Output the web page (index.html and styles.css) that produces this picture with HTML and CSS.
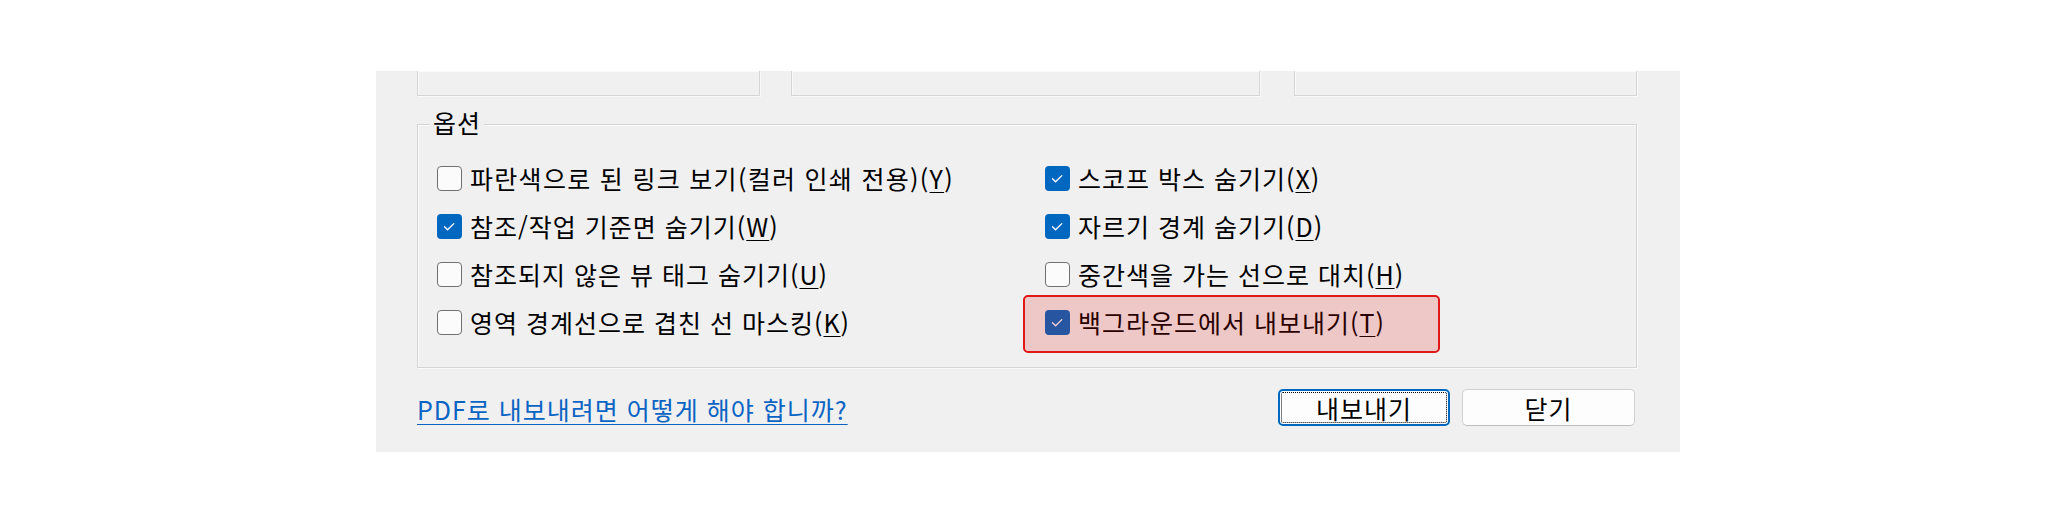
FILE: index.html
```html
<!DOCTYPE html>
<html lang="ko">
<head>
<meta charset="utf-8">
<title>PDF 내보내기 옵션</title>
<link rel="stylesheet" href="styles.css">
</head>
<body>
<div class="dialog">
  <div class="top-row">
    <div class="etched box1"></div>
    <div class="etched box2"></div>
    <div class="etched box3"></div>
  </div>

  <div class="etched group">
    <span class="legend">옵션</span>
    <div class="options">
      <label class="opt">
        <span class="cb"></span>
        <span class="txt">파란색으로 된 링크 보기(컬러 인쇄 전용)(<u>Y</u>)</span>
      </label>
      <label class="opt">
        <span class="cb on"><svg viewBox="0 0 25 25"><path d="M7.5 12.8 L10.6 15.8 L16.8 9.6"/></svg></span>
        <span class="txt">스코프 박스 숨기기(<u>X</u>)</span>
      </label>
      <label class="opt">
        <span class="cb on"><svg viewBox="0 0 25 25"><path d="M7.5 12.8 L10.6 15.8 L16.8 9.6"/></svg></span>
        <span class="txt">참조/작업 기준면 숨기기(<u>W</u>)</span>
      </label>
      <label class="opt">
        <span class="cb on"><svg viewBox="0 0 25 25"><path d="M7.5 12.8 L10.6 15.8 L16.8 9.6"/></svg></span>
        <span class="txt">자르기 경계 숨기기(<u>D</u>)</span>
      </label>
      <label class="opt">
        <span class="cb"></span>
        <span class="txt">참조되지 않은 뷰 태그 숨기기(<u>U</u>)</span>
      </label>
      <label class="opt">
        <span class="cb"></span>
        <span class="txt">중간색을 가는 선으로 대치(<u>H</u>)</span>
      </label>
      <label class="opt">
        <span class="cb"></span>
        <span class="txt">영역 경계선으로 겹친 선 마스킹(<u>K</u>)</span>
      </label>
      <label class="opt highlighted">
        <span class="cb on"><svg viewBox="0 0 25 25"><path d="M7.5 12.8 L10.6 15.8 L16.8 9.6"/></svg></span>
        <span class="txt">백그라운드에서 내보내기(<u>T</u>)</span>
        <span class="mark"></span>
      </label>
    </div>
  </div>

  <div class="footer">
    <a class="help" href="#">PDF로 내보내려면 어떻게 해야 합니까?</a>
    <div class="buttons">
      <button class="btn primary" type="button">내보내기</button>
      <button class="btn" type="button">닫기</button>
    </div>
  </div>
</div>
</body>
</html>
```

FILE: styles.css
```css
html, body {
  margin: 0;
  padding: 0;
  background: #ffffff;
}

body {
  font-family: "Noto Sans CJK KR", "Noto Sans", sans-serif;
  font-size: 25px;
  letter-spacing: 1px;
  color: #000;
}

.dialog {
  box-sizing: border-box;
  margin: 71px 0 0 376px;
  width: 1304px;
  height: 381px;
  background: #f0f0f0;
  padding: 0 43px 0 41px;
}

.etched {
  box-sizing: border-box;
  border: 1px solid #d5d5d5;
  box-shadow: inset 1px 1px 0 #fafafa, 1px 1px 0 #fafafa;
}

.top-row {
  display: flex;
  height: 25px;
}

.top-row .etched {
  border-top: none;
  height: 25px;
}

.box1 { width: 343px; }
.box2 { width: 469px; margin-left: 31px; }
.box3 { width: 343px; margin-left: 34px; }

.group {
  position: relative;
  margin-top: 28px;
  height: 244px;
  padding: 29px 0 0 19px;
}

.legend {
  position: absolute;
  left: 12px;
  top: -18px;
  padding: 0 3px;
  line-height: 30px;
  background: #f0f0f0;
}

.options {
  display: grid;
  grid-template-columns: 608px 1fr;
  grid-auto-rows: 48px;
}

.opt {
  position: relative;
  display: flex;
  align-items: center;
  gap: 8px;
  line-height: 30px;
  white-space: nowrap;
}

.opt:first-child .txt {
  letter-spacing: 1.3px;
}

.cb {
  box-sizing: border-box;
  flex: none;
  width: 25px;
  height: 25px;
  border: 1.5px solid #707070;
  border-radius: 4px;
  background: #fbfbfb;
  display: flex;
}

.cb.on {
  border: none;
  background: #0067c0;
}

.cb svg {
  width: 25px;
  height: 25px;
}

.cb path {
  fill: none;
  stroke: #ffffff;
  stroke-width: 1.3;
  stroke-linecap: round;
  stroke-linejoin: round;
}

.txt u {
  text-decoration-thickness: 1px;
  text-underline-offset: 3px;
}

.mark {
  position: absolute;
  left: -22px;
  top: -3px;
  width: 417px;
  height: 58px;
  box-sizing: border-box;
  border: 2px solid #e01818;
  border-radius: 5px;
  background: rgba(230, 0, 0, 0.17);
}

.footer {
  display: flex;
  align-items: center;
  justify-content: space-between;
  margin-top: 21px;
  padding-right: 2px;
}

.help {
  color: #0a64c4;
  text-decoration: underline;
  text-decoration-thickness: 1px;
  text-underline-offset: 4px;
  line-height: 30px;
  margin-top: 2px;
}

.buttons {
  display: flex;
  gap: 12px;
}

.btn {
  box-sizing: border-box;
  width: 172px;
  height: 37px;
  font-family: inherit;
  font-size: 25px;
  letter-spacing: 1px;
  line-height: 30px;
  padding: 0;
  color: #000;
  background: #fdfdfd;
  border: 1px solid #d0d0d0;
  border-bottom-color: #bdbdbd;
  border-radius: 5px;
}

.btn + .btn {
  width: 173px;
}

.btn.primary {
  border: 2px solid #0067c0;
  outline: 1.5px dotted #000;
  outline-offset: -4px;
}
```
